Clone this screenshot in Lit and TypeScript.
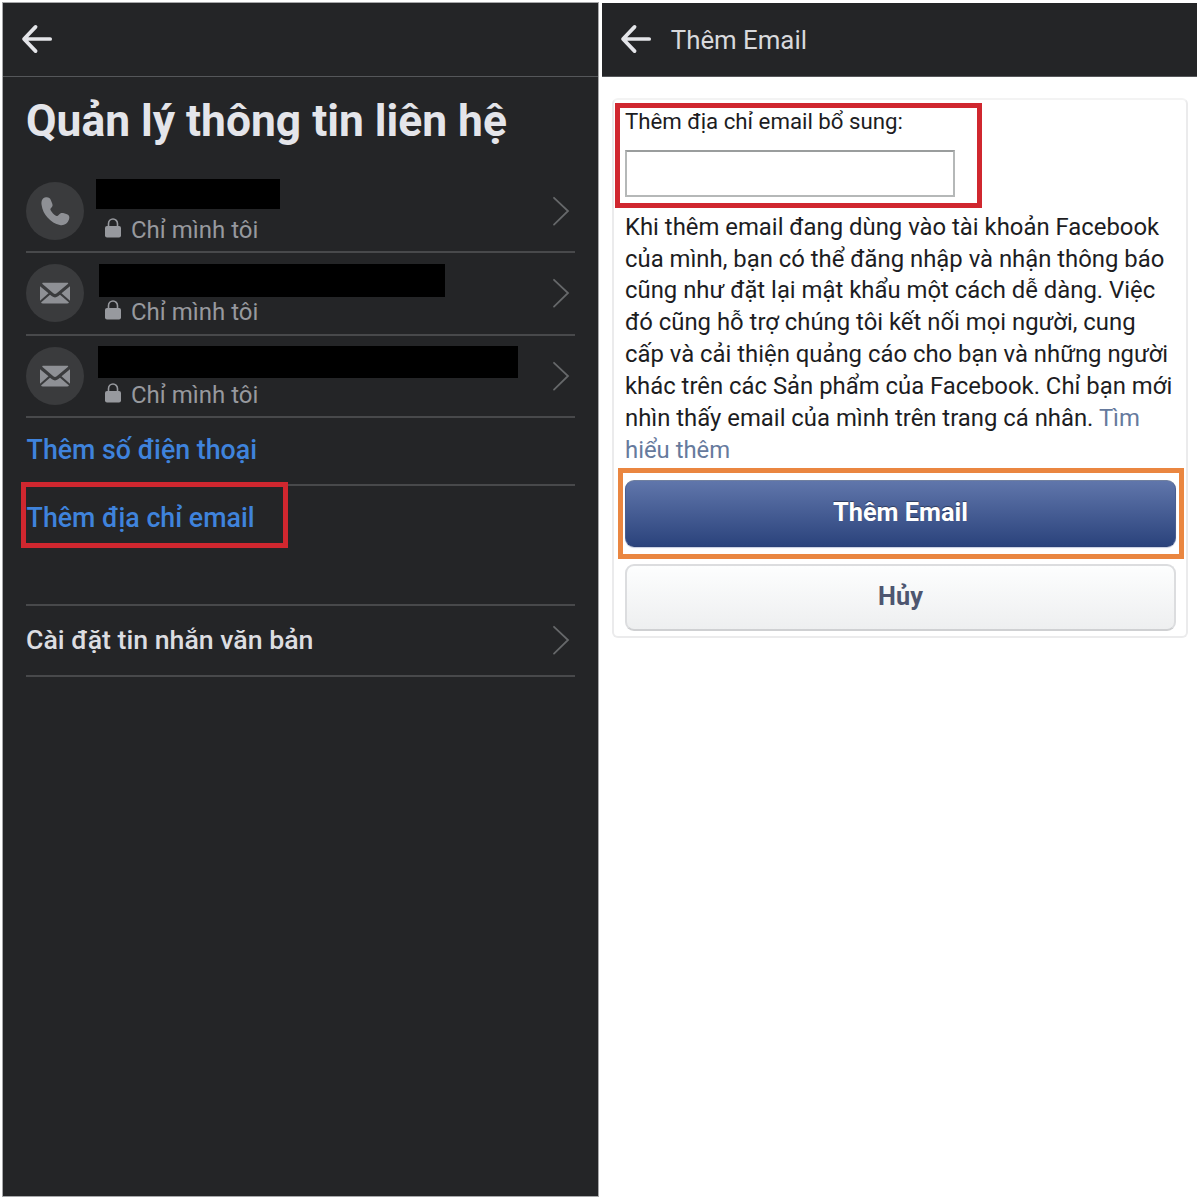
import { LitElement, html, css, svg } from "lit";
import { customElement } from "lit/decorators.js";
import { styleMap } from "lit/directives/style-map.js";

interface Contact {
  kind: "phone" | "mail";
  bar: { left: number; top: number; width: number; height: number };
}

const CONTACTS: Contact[] = [
  { kind: "phone", bar: { left: 0, top: 8, width: 184, height: 30 } },
  { kind: "mail", bar: { left: 3, top: 11, width: 346, height: 33 } },
  { kind: "mail", bar: { left: 2, top: 10.5, width: 420, height: 32 } },
];

const PARAGRAPH = [
  "Khi thêm email đang dùng vào tài khoản Facebook",
  "của mình, bạn có thể đăng nhập và nhận thông báo",
  "cũng như đặt lại mật khẩu một cách dễ dàng. Việc",
  "đó cũng hỗ trợ chúng tôi kết nối mọi người, cung",
  "cấp và cải thiện quảng cáo cho bạn và những người",
  "khác trên các Sản phẩm của Facebook. Chỉ bạn mới",
];

const arrow = html`<svg class="arrow" width="32" height="30" viewBox="0 0 32 30">
  <path d="M14.6 2.9 L3 15 L14.600 27.100 M3.6 15 H29.2" fill="none" stroke="currentColor"
    stroke-width="3.7" stroke-linecap="round" stroke-linejoin="round" />
</svg>`;

const chevron = html`<svg class="chevron" width="18" height="30" viewBox="0 0 18 30">
  <path d="M2 1.8 L16 15 L2 28.6" fill="none" stroke="currentColor" stroke-width="1.8" stroke-linecap="round" />
</svg>`;

const lock = html`<svg width="16" height="20" viewBox="0 0 16 20">
  <path d="M3.5 9 V5.700 a4.500 4.700 0 0 1 9 0 V9" fill="none" stroke="currentColor" stroke-width="1.6" />
  <rect x="0" y="8" width="16" height="11.500" rx="2" fill="currentColor" />
</svg>`;

const glyphs = {
  phone: svg`<path fill="currentColor" d="M20 15.200 C22.700 15 24 16 24.800 18 L26.300 21.800 C26.900 23.600 26.500 24.700 25.300 25.700 C24.200 26.600 24.200 27.400 24.800 28.500 C26 30.600 27.800 32.400 29.900 33.700 C31 34.300 31.800 34.200 32.600 33.100 C33.900 31.200 35.800 30.700 38 31.300 L41 32.300 C43.200 33.200 43.900 35.200 43 37.600 C41.500 42 37.800 43.800 33.800 43 C24.800 41 16.800 32.600 15.600 23 C15 18.600 16.400 15.600 20 15.200 Z"/>`,
  mail: svg`<path fill="currentColor" d="M17 18.800 H41.500 Q43 18.800 41.800 19.900 L30.700 29.300 Q29 30.600 27.300 29.300 L16.500 19.900 Q15.600 18.800 17 18.800 Z M14 22.200 L22.500 29.300 L14 36.800 Z M44 22.200 L35.500 29.300 L44 36.800 Z M24 30.700 L26 32.300 Q29 34.500 32 32.300 L34 30.700 L43 38.400 Q42.500 39.400 41 39.400 H17 Q15.500 39.400 15 38.400 Z"/>`,
};

@customElement("app-root")
export class AppRoot extends LitElement {
  static styles = css`
    :host {
      display: block;
      width: 1200px;
      height: 1200px;
      overflow: hidden;
      background: #fff;
      font-family: Roboto, sans-serif;
    }
    * { box-sizing: border-box; }
    svg { display: block; flex: none; }
    .screens {
      display: grid;
      grid-template-columns: 595px 595px;
      column-gap: 4px;
      padding: 3px;
      height: 1200px;
    }
    .screen { height: 1194px; }
    .dark { background: #242527; box-shadow: 0 0 0 1px #a7a8aa; height: 1193px; }
    .bar {
      height: 74px;
      display: flex;
      align-items: center;
      padding: 0 0 1px 18.4px;
      gap: 18.4px;
      background: #242527;
      border-bottom: 1px solid #55575a;
      color: #e4e5e9;
    }
    .bar-title { font-size: 25.8px; color: #d8d9dc; padding-top: 2px; }
    .content { padding: 0 23px; }
    h1 {
      margin: 0;
      height: 94px;
      line-height: 88px;
      font-size: 44.35px;
      font-weight: 700;
      color: #e4e5ea;
      white-space: nowrap;
    }
    .row {
      height: 82.3px;
      display: flex;
      border-bottom: 2px solid #48494b;
      align-items: center;
    }
    .disc {
      width: 58px;
      height: 58px;
      border-radius: 50%;
      background: #3a3b3d;
      color: #8e9095;
      flex: none;
    }
    .info { flex: 1; align-self: stretch; padding-left: 12px; }
    .slot { height: 44px; display: flex; align-items: flex-start; }
    .redacted { background: #000; }
    .privacy {
      display: flex;
      align-items: center;
      gap: 10px;
      height: 30px;
      padding-left: 9px;
      color: #97999e;
      font-size: 24px;
    }
    .privacy svg { margin-top: -4px; }
    .chevron { color: #66686a; margin-right: 5px; }
    .link {
      height: 68px;
      line-height: 65px;
      padding-left: 0.6px;
      border-bottom: 2px solid #48494b;
      color: #3f83dc;
      font-size: 26.75px;
      font-weight: 500;
      position: relative;
    }
    .link.last { height: 120px; }
    .mark { position: absolute; border: 5px solid #d0272f; pointer-events: none; }
    .mark-link { left: -5px; top: -4px; width: 267px; height: 66px; }
    .mark-input { left: 1px; top: 3px; width: 367px; height: 105px; }
    .mark-button { left: -7px; top: -12px; width: 566px; height: 91px; border-color: #ea8640; }
    .settings {
      height: 71px;
      display: flex;
      justify-content: space-between;
      align-items: center;
      border-bottom: 2px solid #48494b;
      color: #dcdde1;
      font-size: 26.7px;
      font-weight: 500;
    }
    .light { color: #1d1d1f; }
    .card {
      position: relative;
      margin: 21px 9px 0 10px;
      height: 540px;
      border: 2px solid #ebebec;
      border-top-color: #f3f3f3;
      border-radius: 6px;
      padding: 6px 11px 0;
      font-size: 23.86px;
    }
    .label { display: block; height: 31px; line-height: 31px; font-size: 22.25px; }
    .field {
      display: block;
      width: 330px;
      height: 47px;
      margin-top: 13px;
      border: 2px solid #b5b8b8;
      border-top-color: #9a9d9d;
      border-radius: 0;
      background: #fff;
      padding: 0 8px;
      font: inherit;
    }
    .text { margin: 14.8px 0 0; line-height: 31.85px; white-space: nowrap; }
    .more { color: #667a9d; }
    .btn-wrap { position: relative; margin-top: 13.2px; }
    .btn {
      display: block;
      width: 551px;
      height: 67px;
      border-radius: 9px;
      border: 1px solid #5a6a9a;
      font: 700 25.3px Roboto, sans-serif;
      padding: 0 0 2px;
    }
    .primary {
      color: #fff;
      background: linear-gradient(#6076ab, #2b437c);
      border-color: #71809f #4a5e90 #2b4076;
      text-shadow: 0 -1px 1px rgba(0, 0, 0, 0.4);
      box-shadow: 0 1px 1px #c6cee0;
    }
    .cancel {
      margin-top: 17px;
      color: #4e5670;
      background: linear-gradient(#fdfefe, #eeeff0);
      border: 2px solid #dcdddf;
      border-bottom-color: #cfd0d2;
    }
  `;

  private contact(c: Contact) {
    const { left, top, width, height } = c.bar;
    return html`<div class="row">
      <svg class="disc" viewBox="0 0 58 58">${glyphs[c.kind]}</svg>
      <div class="info">
        <div class="slot">
          <div class="redacted" style=${styleMap({
            width: `${width}px`,
            height: `${height}px`,
            margin: `${top}px 0 0 ${left}px`,
          })}></div>
        </div>
        <div class="privacy">${lock}<span>Chỉ mình tôi</span></div>
      </div>
      ${chevron}
    </div>`;
  }

  render() {
    return html`<div class="screens">
      <section class="screen dark">
        <header class="bar">${arrow}</header>
        <div class="content">
          <h1>Quản lý thông tin liên hệ</h1>
          ${CONTACTS.map((c) => this.contact(c))}
          <div class="link">Thêm số điện thoại</div>
          <div class="link last">Thêm địa chỉ email<div class="mark mark-link"></div></div>
          <div class="settings"><span>Cài đặt tin nhắn văn bản</span>${chevron}</div>
        </div>
      </section>
      <section class="screen light">
        <header class="bar">${arrow}<span class="bar-title">Thêm Email</span></header>
        <div class="card">
          <label class="label" for="email">Thêm địa chỉ email bổ sung:</label>
          <input class="field" id="email" type="email" />
          <p class="text">
            ${PARAGRAPH.map((line) => html`${line}<br />`)}
            nhìn thấy email của mình trên trang cá nhân. <a class="more">Tìm<br />hiểu thêm</a>
          </p>
          <div class="btn-wrap">
            <button class="btn primary">Thêm Email</button>
            <div class="mark mark-button"></div>
          </div>
          <button class="btn cancel">Hủy</button>
          <div class="mark mark-input"></div>
        </div>
      </section>
    </div>`;
  }
}
